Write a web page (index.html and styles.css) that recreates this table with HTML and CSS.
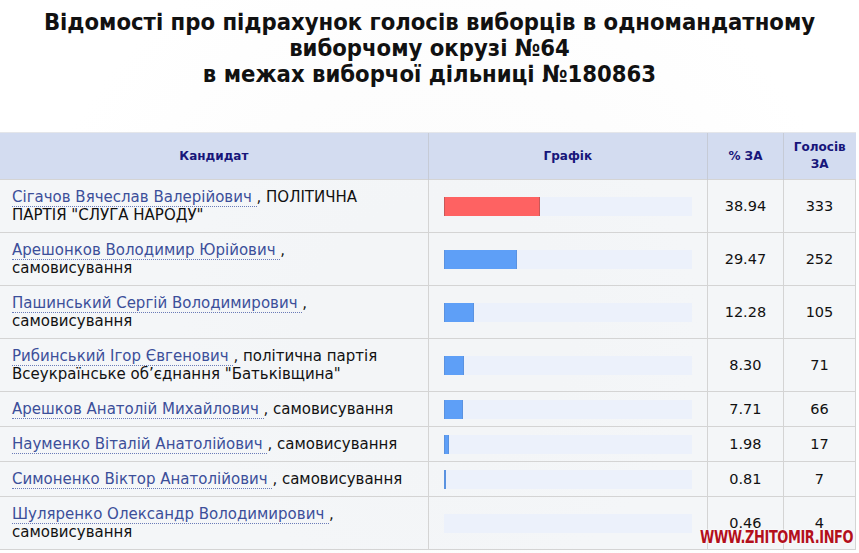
FILE: index.html
```html
<!DOCTYPE html>
<html lang="uk">
<head>
<meta charset="utf-8">
<link rel="stylesheet" href="styles.css">
</head>
<body>
<div class="page">
  <h1 class="title">Відомості про підрахунок голосів виборців в одномандатному<br>виборчому окрузі №64<br>в межах виборчої дільниці №180863</h1>
  <table class="results">
    <thead>
      <tr>
        <th class="c-name">Кандидат</th>
        <th class="c-chart">Графік</th>
        <th class="c-pct">% ЗА</th>
        <th class="c-votes">Голосів<br>ЗА</th>
      </tr>
    </thead>
    <tbody>
      <tr>
        <td class="c-name"><a class="cand">Сігачов Вячеслав Валерійович </a>, ПОЛІТИЧНА ПАРТІЯ "СЛУГА НАРОДУ"</td>
        <td class="c-chart"><div class="bar"><div class="fill red" style="width:38.94%"></div></div></td>
        <td class="c-pct">38.94</td>
        <td class="c-votes">333</td>
      </tr>
      <tr>
        <td class="c-name"><a class="cand">Арешонков Володимир Юрійович </a>, самовисування</td>
        <td class="c-chart"><div class="bar"><div class="fill" style="width:29.47%"></div></div></td>
        <td class="c-pct">29.47</td>
        <td class="c-votes">252</td>
      </tr>
      <tr>
        <td class="c-name"><a class="cand">Пашинський Сергій Володимирович </a>, самовисування</td>
        <td class="c-chart"><div class="bar"><div class="fill" style="width:12.28%"></div></div></td>
        <td class="c-pct">12.28</td>
        <td class="c-votes">105</td>
      </tr>
      <tr>
        <td class="c-name"><a class="cand">Рибинський Ігор Євгенович </a>, політична партія Всеукраїнське об’єднання "Батьківщина"</td>
        <td class="c-chart"><div class="bar"><div class="fill" style="width:8.30%"></div></div></td>
        <td class="c-pct">8.30</td>
        <td class="c-votes">71</td>
      </tr>
      <tr>
        <td class="c-name"><a class="cand">Арешков Анатолій Михайлович </a>, самовисування</td>
        <td class="c-chart"><div class="bar"><div class="fill" style="width:7.71%"></div></div></td>
        <td class="c-pct">7.71</td>
        <td class="c-votes">66</td>
      </tr>
      <tr>
        <td class="c-name"><a class="cand">Науменко Віталій Анатолійович </a>, самовисування</td>
        <td class="c-chart"><div class="bar"><div class="fill" style="width:1.98%"></div></div></td>
        <td class="c-pct">1.98</td>
        <td class="c-votes">17</td>
      </tr>
      <tr>
        <td class="c-name"><a class="cand">Симоненко Віктор Анатолійович </a>, самовисування</td>
        <td class="c-chart"><div class="bar"><div class="fill" style="width:0.81%"></div></div></td>
        <td class="c-pct">0.81</td>
        <td class="c-votes">7</td>
      </tr>
      <tr>
        <td class="c-name"><a class="cand">Шуляренко Олександр Володимирович </a>, самовисування</td>
        <td class="c-chart"><div class="bar"><div class="fill none"></div></div></td>
        <td class="c-pct">0.46</td>
        <td class="c-votes">4</td>
      </tr>
    </tbody>
  </table>
  <div class="watermark">WWW.ZHITOMIR.INFO</div>
</div>
</body>
</html>
```
FILE: styles.css
```css
html, body {
  margin: 0;
  padding: 0;
  background: #ffffff;
}
body {
  font-family: "DejaVu Sans", Verdana, sans-serif;
  color: #111;
}
.page {
  position: relative;
  width: 859px;
  height: 553px;
  overflow: hidden;
  background: radial-gradient(circle at 440px 330px, #fbfbfb 0, #fdfdfd 260px, #ffffff 420px);
}
.title {
  margin: 0;
  padding: 9px 0 0;
  height: 123px;
  box-sizing: border-box;
  text-align: center;
  font-family: "DejaVu Sans Condensed", "DejaVu Sans", sans-serif;
  font-stretch: condensed;
  font-weight: bold;
  font-size: 23.6px;
  line-height: 26px;
  color: #111;
}
.results {
  margin-top: 9px;
  width: 856px;
  border-collapse: collapse;
  table-layout: fixed;
  font-size: 15px;
  line-height: 18px;
}
.results th {
  background: #d3dcf0;
  color: #17167a;
  font-size: 12px;
  font-weight: bold;
  line-height: 17px;
  height: 47px;
  padding: 0;
  box-sizing: border-box;
  border-left: 1px solid #c6cbd6;
  border-top: 1px solid #e4e6ea;
}
.results td {
  background: rgba(240, 243, 246, 0.75);
  border: 1px solid #d4d4d4;
  padding: 8px 22px 8px 12px;
  vertical-align: middle;
}
.results th:first-child, .results td:first-child { border-left: none; }
.c-name { width: 428px; }
.c-chart { width: 279px; }
.c-pct { width: 76px; }
.c-votes { width: 72px; }
.results td.c-chart { padding: 0 15px; }
.results td.c-pct, .results td.c-votes { text-align: center; padding: 8px 0; font-size: 14.5px; }
.cand {
  color: #3c4f9a;
  text-decoration: none;
  border-bottom: 1px dotted #6a7bb8;
}
.bar {
  height: 19px;
  background: #ecf1fb;
}
.fill {
  height: 19px;
  background: #5e9ff7;
  box-sizing: border-box;
  border: 1px solid #5a92e0;
  border-width: 0 1px;
}
.fill.none {
  width: 0;
  border: none;
}
.fill.red {
  background: #fe6262;
  border-color: #c85858;
}
.watermark {
  position: absolute;
  left: 700px;
  top: 526px;
  font-family: "DejaVu Sans Condensed", "DejaVu Sans", sans-serif;
  font-stretch: condensed;
  font-weight: bold;
  font-size: 18px;
  letter-spacing: -0.5px;
  transform: scaleX(0.8);
  transform-origin: left top;
  color: #b3101c;
  text-shadow: 0 0 2px #fff, 0 0 2px #fff;
}
```
